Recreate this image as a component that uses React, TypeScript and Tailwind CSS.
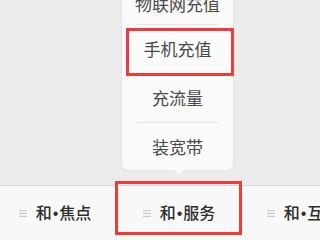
import React from "react";

const font = { fontFamily: '"Noto Sans CJK SC", "Noto Sans", sans-serif' };
const bulletFont = { fontFamily: '"Liberation Sans", Arial, sans-serif' };

function Burger() {
  return (
    <svg width="8" height="7" viewBox="0 0 8 7" className="shrink-0">
      <rect x="0" y="0" width="8" height="1.2" fill="#c9c9c9" />
      <rect x="0" y="2.9" width="8" height="1.2" fill="#c9c9c9" />
      <rect x="0" y="5.8" width="8" height="1.2" fill="#c9c9c9" />
    </svg>
  );
}

function Tab({ a, b }: { a: string; b: string }) {
  return (
    <div className="w-[124px] shrink-0 h-full flex items-center justify-center gap-[9px]">
      <Burger />
      <span className="text-[16px] text-[#2e2e2e] font-medium whitespace-nowrap">
        {a}
        <span className="mx-[1px]" style={bulletFont}>•</span>
        {b}
      </span>
    </div>
  );
}

export default function App() {
  return (
    <div className="w-[320px] h-[240px] relative overflow-hidden bg-[#ececec] flex flex-col" style={font}>
      <div className="h-[185px] shrink-0" />
      <div className="flex-1 bg-[#f8f8f8] border-t border-[#d6d6d6] flex overflow-hidden">
        <div className="flex h-full ml-[-7px]">
          <Tab a="和" b="焦点" />
          <Tab a="和" b="服务" />
          <Tab a="和" b="互动" />
        </div>
      </div>

      {/* popup menu */}
      <div className="absolute left-[122px] top-[-20px] w-[111px] bg-[#fafafa] rounded-[6px] shadow-[0_0_2px_rgba(0,0,0,0.12)] flex flex-col text-[17px] text-[#4a4a4a]">
        <div className="h-[44px] flex items-center justify-center pt-[4px]">物联网充值</div>
        <div className="mx-[15px] h-px bg-[#e2e2e2]" />
        <div className="h-[48px] flex items-center justify-center">手机充值</div>
        <div className="mx-[15px] h-px bg-[#e2e2e2]" />
        <div className="h-[48px] flex items-center justify-center">充流量</div>
        <div className="mx-[15px] h-px bg-[#e2e2e2]" />
        <div className="h-[47px] flex items-center justify-center">装宽带</div>
        <div className="absolute left-[52px] bottom-[-5px] w-0 h-0 border-l-[5px] border-r-[5px] border-t-[5px] border-l-transparent border-r-transparent border-t-[#fafafa]" />
      </div>

      {/* highlight boxes */}
      <div className="absolute left-[126px] top-[28px] w-[108px] h-[48px] border-[3px] border-[#f23a3a]" />
      <div className="absolute left-[115px] top-[181px] w-[127px] h-[54px] border-[3px] border-[#f23a3a]" />
    </div>
  );
}
